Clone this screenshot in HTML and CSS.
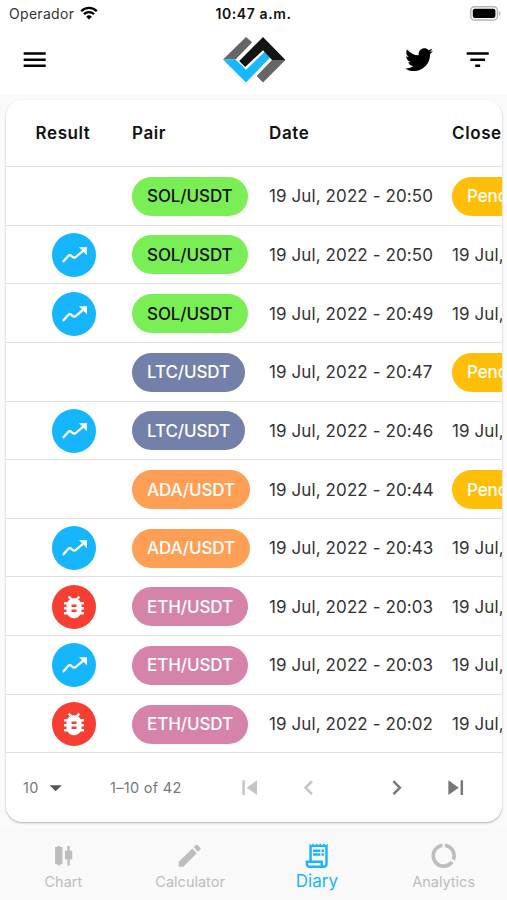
FILE: index.html
```html
<!DOCTYPE html>
<html lang="en">

<head>
    <meta charset="UTF-8">
    <meta name="viewport" content="width=device-width, initial-scale=1.0">
    <title>Diary</title>
    <link rel="stylesheet" href="styles.css">
</head>

<body>
<!-- Icons -->
<svg class="sprite">
    <symbol id="trend" viewBox="0 0 44 44">
        <path d="M11.5 28.3L16 23.2Q17.9 21.2 19.8 23.2Q21.9 25.6 24.2 23.6L31 17.8" fill="none" stroke="currentColor" stroke-width="2.3" stroke-linecap="round"/>
        <path d="M27 14.3h8v7.9z" fill="currentColor"/>
    </symbol>
    <symbol id="bug" viewBox="0 0 24 24">
        <path fill="currentColor" d="M20 8h-2.81c-.45-.78-1.07-1.45-1.82-1.96L17 4.41 15.59 3l-2.17 2.17C12.96 5.06 12.49 5 12 5s-.96.06-1.41.17L8.41 3 7 4.41l1.62 1.63C7.88 6.55 7.26 7.22 6.81 8H4v2h2.09c-.05.33-.09.66-.09 1v1H4v2h2v1c0 .34.04.67.09 1H4v2h2.81c1.04 1.79 2.97 3 5.19 3s4.15-1.21 5.19-3H20v-2h-2.09c.05-.33.09-.66.09-1v-1h2v-2h-2v-1c0-.34-.04-.67-.09-1H20V8zm-6 8h-4v-2h4v2zm0-4h-4v-2h4v2z"/>
    </symbol>
</svg>

<div class="status-bar">
    <div class="carrier">
        <span>Operador</span>
        <svg class="wifi" viewBox="0 0 18 14">
            <path d="M1.2 5.2a11 11 0 0 1 15.6 0M4 8.2a7.2 7.2 0 0 1 10 0" fill="none" stroke="#000" stroke-width="2.3"/>
            <path d="M9 13.6L6.2 10.7a4 4 0 0 1 5.6 0z"/>
        </svg>
    </div>
    <div class="clock">10:47 a.m.</div>
    <svg class="battery" viewBox="0 0 31 15">
        <rect x="0.8" y="0.8" width="26.6" height="13.2" rx="3.6" fill="#fff" stroke="#b5b5b5" stroke-width="1.4"/>
        <rect x="2.8" y="2.8" width="22.6" height="9.2" rx="2"/>
        <path d="M28.8 5v4.8q1.7-.8 1.7-2.4t-1.7-2.4z" fill="#b5b5b5"/>
    </svg>
</div>

<header class="app-bar">
    <svg class="icon" viewBox="0 0 24 24"><path d="M3 18h18v-2H3v2zm0-5h18v-2H3v2zm0-7v2h18V6H3z"/></svg>
    <svg class="logo" viewBox="0 0 64 48">
        <path d="M24 1l6.2 5.2L13.5 23.5H1z" fill="#666"/>
        <path d="M1 23.5h12.5L24 33.8 43 15.5l5.5 5.5L24 46.5z" fill="#16b9ff"/>
        <path d="M41 1l22.5 23H50L41 14.2 23.2 31l-6-6z" fill="#141414"/>
        <path d="M50 24h13.5L41 46.5 34.6 40z" fill="#666"/>
    </svg>
    <div class="app-actions">
        <svg class="twitter" viewBox="0 0 24 24"><path d="M22.46 6c-.77.35-1.6.58-2.46.69.88-.53 1.56-1.37 1.88-2.38-.83.5-1.75.85-2.72 1.05C18.37 4.5 17.26 4 16 4c-2.35 0-4.27 1.92-4.27 4.29 0 .34.04.67.11.98C8.28 9.09 5.11 7.38 3 4.79c-.37.63-.58 1.37-.58 2.15 0 1.49.75 2.81 1.91 3.56-.71 0-1.37-.2-1.95-.5v.03c0 2.08 1.48 3.82 3.44 4.21a4.22 4.22 0 0 1-1.93.07 4.28 4.28 0 0 0 4 2.98 8.521 8.521 0 0 1-5.33 1.84c-.34 0-.68-.02-1.02-.06C3.44 20.29 5.7 21 8.12 21 16 21 20.33 14.46 20.33 8.79c0-.19 0-.37-.01-.56.84-.6 1.56-1.36 2.14-2.23z"/></svg>
        <svg class="icon" viewBox="0 0 24 24"><path d="M10 18h4v-2h-4v2zM3 6v2h18V6H3zm3 7h12v-2H6v2z"/></svg>
    </div>
</header>

<main class="card">
    <div class="table-wrap">
        <table>
            <colgroup>
                <col class="col-result">
                <col class="col-pair">
                <col class="col-date">
                <col class="col-closed">
            </colgroup>
            <thead>
                <tr><th>Result</th><th>Pair</th><th>Date</th><th>Closed</th></tr>
            </thead>
            <tbody>
                <tr>
                    <td></td>
                    <td><span class="chip sol">SOL/USDT</span></td>
                    <td>19 Jul, 2022 - 20:50</td>
                    <td><span class="chip pending">Pending</span></td>
                </tr>
                <tr>
                    <td><span class="result win"><svg><use href="#trend"/></svg></span></td>
                    <td><span class="chip sol">SOL/USDT</span></td>
                    <td>19 Jul, 2022 - 20:50</td>
                    <td>19 Jul, 2022</td>
                </tr>
                <tr>
                    <td><span class="result win"><svg><use href="#trend"/></svg></span></td>
                    <td><span class="chip sol">SOL/USDT</span></td>
                    <td>19 Jul, 2022 - 20:49</td>
                    <td>19 Jul, 2022</td>
                </tr>
                <tr>
                    <td></td>
                    <td><span class="chip ltc">LTC/USDT</span></td>
                    <td>19 Jul, 2022 - 20:47</td>
                    <td><span class="chip pending">Pending</span></td>
                </tr>
                <tr>
                    <td><span class="result win"><svg><use href="#trend"/></svg></span></td>
                    <td><span class="chip ltc">LTC/USDT</span></td>
                    <td>19 Jul, 2022 - 20:46</td>
                    <td>19 Jul, 2022</td>
                </tr>
                <tr>
                    <td></td>
                    <td><span class="chip ada">ADA/USDT</span></td>
                    <td>19 Jul, 2022 - 20:44</td>
                    <td><span class="chip pending">Pending</span></td>
                </tr>
                <tr>
                    <td><span class="result win"><svg><use href="#trend"/></svg></span></td>
                    <td><span class="chip ada">ADA/USDT</span></td>
                    <td>19 Jul, 2022 - 20:43</td>
                    <td>19 Jul, 2022</td>
                </tr>
                <tr>
                    <td><span class="result loss"><svg><use href="#bug"/></svg></span></td>
                    <td><span class="chip eth">ETH/USDT</span></td>
                    <td>19 Jul, 2022 - 20:03</td>
                    <td>19 Jul, 2022</td>
                </tr>
                <tr>
                    <td><span class="result win"><svg><use href="#trend"/></svg></span></td>
                    <td><span class="chip eth">ETH/USDT</span></td>
                    <td>19 Jul, 2022 - 20:03</td>
                    <td>19 Jul, 2022</td>
                </tr>
                <tr>
                    <td><span class="result loss"><svg><use href="#bug"/></svg></span></td>
                    <td><span class="chip eth">ETH/USDT</span></td>
                    <td>19 Jul, 2022 - 20:02</td>
                    <td>19 Jul, 2022</td>
                </tr>
            </tbody>
        </table>
    </div>

    <div class="pagination">
        <div class="page-size">
            <span>10</span>
            <svg class="icon" viewBox="0 0 24 24"><path d="M7 10l5 5 5-5z"/></svg>
        </div>
        <span class="page-info">1–10 of 42</span>
        <div class="page-buttons">
            <svg class="icon disabled" viewBox="0 0 24 24"><path d="M6 6h2v12H6zm3.5 6l8.5 6V6z"/></svg>
            <svg class="icon disabled" viewBox="0 0 24 24"><path d="M15.41 7.41L14 6l-6 6 6 6 1.41-1.41L10.83 12z"/></svg>
            <svg class="icon next" viewBox="0 0 24 24"><path d="M10 6L8.59 7.41 13.17 12l-4.58 4.59L10 18l6-6z"/></svg>
            <svg class="icon" viewBox="0 0 24 24"><path d="M6 18l8.5-6L6 6v12zM16 6v12h2V6h-2z"/></svg>
        </div>
    </div>
</main>

<nav class="bottom-nav">
    <a class="nav-item">
        <svg class="icon" viewBox="0 0 24 24"><path d="M9 4H7v1H5v14h2v1h2v-1h2V5H9V4zm10 4h-2V4h-2v4h-2v7h2v5h2v-5h2V8z"/></svg>
        <span>Chart</span>
    </a>
    <a class="nav-item">
        <svg class="icon" viewBox="0 0 24 24"><path d="M3 17.25V21h3.75L17.81 9.94l-3.75-3.75L3 17.25zM20.71 7.04c.39-.39.39-1.02 0-1.41l-2.34-2.34c-.39-.39-1.02-.39-1.41 0l-1.83 1.83 3.75 3.75 1.83-1.83z"/></svg>
        <span>Calculator</span>
    </a>
    <a class="nav-item active">
        <svg class="icon" viewBox="0 0 24 24"><path d="M19.5 3.5L18 2l-1.5 1.5L15 2l-1.5 1.5L12 2l-1.5 1.5L9 2 7.5 3.5 6 2v14H3v3c0 1.66 1.34 3 3 3h12c1.66 0 3-1.34 3-3V2l-1.5 1.5zM15 20H6c-.55 0-1-.45-1-1v-1h10v2zm4-1c0 .55-.45 1-1 1s-1-.45-1-1v-3H8V5h11v14zM9 7h6v2H9zm7 0h2v2h-2zm-7 3h6v2H9zm7 0h2v2h-2z"/></svg>
        <span>Diary</span>
    </a>
    <a class="nav-item">
        <svg class="icon" viewBox="0 0 24 24"><path d="M13 2.05v3.03c3.39.49 6 3.39 6 6.92 0 .9-.18 1.75-.48 2.54l2.6 1.53c.56-1.24.88-2.62.88-4.07 0-5.18-3.95-9.45-9-9.95zM12 19c-3.87 0-7-3.13-7-7 0-3.53 2.61-6.43 6-6.92V2.05c-5.06.5-9 4.76-9 9.95 0 5.52 4.47 10 9.99 10 3.31 0 6.24-1.61 8.06-4.09l-2.6-1.53C16.17 17.98 14.21 19 12 19z"/></svg>
        <span>Analytics</span>
    </a>
</nav>
</body>

</html>
```
FILE: styles.css
```css
* {
    box-sizing: border-box;
}

body {
    display: flex;
    flex-direction: column;
    height: 100vh;
    margin: 0;
    overflow: hidden;
    font-family: Inter, "Liberation Sans", sans-serif;
    background-color: #fafafa;
    color: #111;
}

svg {
    display: block;
    flex: none;
}

.sprite {
    position: absolute;
    width: 0;
    height: 0;
}

.icon {
    width: 29.4px;
    height: 29.4px;
    fill: currentColor;
}

/* Status bar */
.status-bar {
    display: grid;
    grid-template-columns: 1fr auto 1fr;
    align-items: center;
    height: 28px;
    padding: 0 6px 1px 9px;
    background-color: #fff;
    font-size: 14px;
}

.carrier {
    display: flex;
    align-items: center;
    gap: 6px;
    color: #333;
    letter-spacing: 0.3px;
}

.wifi {
    width: 18px;
    height: 14px;
    margin-top: -2px;
}

.clock {
    font-weight: 600;
    letter-spacing: 0.6px;
    margin-right: 3px;
}

.battery {
    width: 31px;
    height: 15px;
    justify-self: end;
    margin-top: -1px;
}

/* App bar */
.app-bar {
    display: grid;
    grid-template-columns: 1fr auto 1fr;
    align-items: center;
    height: 66px;
    padding: 0 15px 3px 20px;
    background-color: #fff;
    color: #000;
}

.logo {
    width: 64px;
    height: 48px;
    margin-right: 5px;
}

.app-actions {
    display: flex;
    align-items: center;
    justify-self: end;
    gap: 28px;
}

.twitter {
    width: 32px;
    height: 32px;
    margin-top: -1px;
}

/* Table card */
.card {
    width: 496px;
    height: 722px;
    margin: 6px 0 0 6px;
    border-radius: 16px;
    background-color: #fff;
    box-shadow: 0 1px 2px rgba(0, 0, 0, 0.3);
    overflow: hidden;
}

.table-wrap {
    overflow: hidden;
}

table {
    width: 640px;
    table-layout: fixed;
    border-collapse: separate;
    border-spacing: 0;
    font-size: 17px;
    white-space: nowrap;
}

.col-result {
    width: 111px;
}

.col-pair {
    width: 137px;
}

.col-date {
    width: 183px;
}

th,
td {
    padding: 0 0 0 15px;
    border-bottom: 1.5px solid #e0e0e0;
    text-align: left;
}

th {
    height: 67px;
    font-weight: 600;
    letter-spacing: 0.6px;
}

td {
    height: 58.65px;
    padding-top: 1px;
    color: #333;
    letter-spacing: 0.1px;
}

th:first-child {
    padding-left: 29.5px;
}

td:first-child {
    padding-left: 46px;
}

.chip {
    display: inline-flex;
    align-items: center;
    height: 39px;
    padding: 0 15px;
    border-radius: 20px;
    color: #fff;
    font-weight: 500;
    letter-spacing: -0.1px;
    vertical-align: middle;
}

.sol {
    background-color: #7aef55;
    color: #111;
}

.ltc {
    background-color: #7380a9;
}

.ada {
    background-color: #ff9f55;
}

.eth {
    background-color: #d683aa;
}

.pending {
    background-color: #ffbf08;
}

.result {
    display: flex;
    align-items: center;
    justify-content: center;
    width: 44px;
    height: 44px;
    border-radius: 50%;
    color: #fff;
}

.win {
    background-color: #16b6ff;
}

.loss {
    background-color: #f63f32;
}

.win svg {
    width: 44px;
    height: 44px;
}

.loss svg {
    width: 30px;
    height: 30px;
}

/* Pagination */
.pagination {
    display: flex;
    align-items: center;
    height: 68px;
    padding: 0 32px 0 17px;
    font-size: 14.5px;
    color: #777;
}

.page-size {
    display: flex;
    align-items: center;
    gap: 2px;
    width: 87px;
}

.page-size .icon {
    color: #555;
}

.page-info,
.page-size span {
    letter-spacing: 0.3px;
}

.page-buttons {
    display: flex;
    gap: 29px;
    margin-left: auto;
}

.page-buttons .next {
    margin-left: 30px;
}

.disabled {
    color: #c4c4c4;
}

/* Bottom navigation */
.bottom-nav {
    display: grid;
    grid-template-columns: repeat(4, 1fr);
    height: 72px;
    margin-top: auto;
    background-color: #f9f9f9;
}

.nav-item {
    display: flex;
    flex-direction: column;
    align-items: center;
    padding-top: 13px;
    gap: 3px;
    font-size: 14.5px;
    color: #bdbdbd;
}

.nav-item.active {
    gap: 1px;
    font-size: 17px;
    color: #16b6ff;
}
```
